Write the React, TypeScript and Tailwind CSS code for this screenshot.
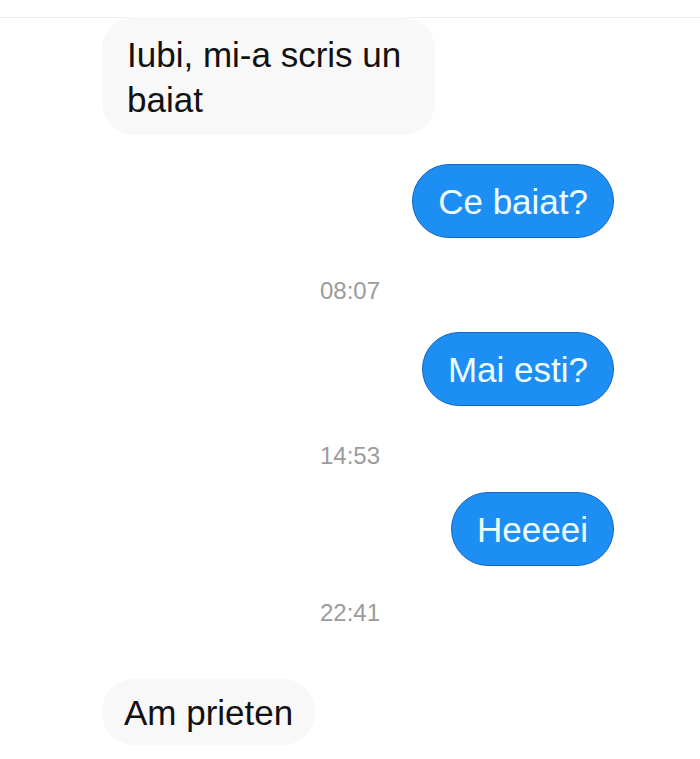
const font = { fontFamily: '"Liberation Sans", Arial, sans-serif' };

function Received({ children, className }: { children: React.ReactNode; className: string }) {
  return (
    <div className={`ml-[102px] self-start rounded-[32px] bg-[#f8f8f8] text-[35px] text-[#111111] ${className}`}>
      {children}
    </div>
  );
}

function Sent({ text, className }: { text: string; className: string }) {
  return (
    <div
      className={`mr-[86px] flex h-[74px] items-center self-end rounded-full border border-[#1466bd] bg-[#1c8ef4] px-[25px] text-[35px] leading-none text-[#eefeff] ${className}`}
    >
      {text}
    </div>
  );
}

function Stamp({ time, className }: { time: string; className: string }) {
  return (
    <div className={`h-[30px] text-center text-[24px] leading-[30px] text-[#9b9b9b] ${className}`}>{time}</div>
  );
}

export default function App() {
  return (
    <div className="h-[759px] w-[700px] overflow-hidden bg-white" style={font}>
      <div className="mt-[17px] flex flex-col border-t border-[#eeeeee]">
        <Received className="-mt-px h-[118px] w-[333px] pl-[25px] pt-[15px] leading-[45px]">
          Iubi, mi-a scris un
          <br />
          baiat
        </Received>
        <Sent text="Ce baiat?" className="mt-[29px]" />
        <Stamp time="08:07" className="mt-[38px]" />
        <Sent text="Mai esti?" className="mt-[26px]" />
        <Stamp time="14:53" className="mt-[35px]" />
        <Sent text="Heeeei" className="mt-[21px]" />
        <Stamp time="22:41" className="mt-[32px]" />
        <Received className="mt-[51px] flex h-[66px] items-center px-[22px] leading-none">Am prieten</Received>
      </div>
    </div>
  );
}
